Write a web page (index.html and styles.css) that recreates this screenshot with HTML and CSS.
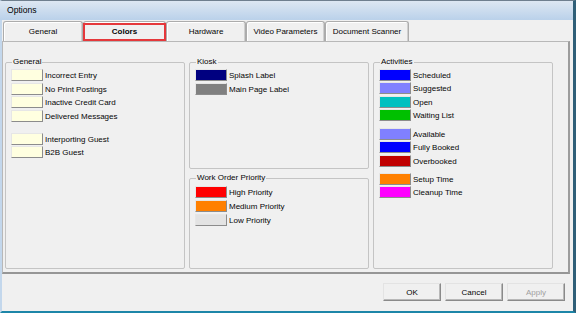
FILE: index.html
```html
<!DOCTYPE html>
<html>
<head>
    <meta charset="utf-8">
    <title>Options</title>
    <link rel="stylesheet" href="styles.css">
</head>
<body>
    <div class="window">
        <div class="titlebar">Options</div>
        <div class="tabs">
            <div class="tab tab-general">General</div>
            <div class="tab tab-colors active">Colors</div>
            <div class="tab tab-hardware">Hardware</div>
            <div class="tab tab-video">Video Parameters</div>
            <div class="tab tab-scanner">Document Scanner</div>
        </div>
        <div class="panel">
            <fieldset class="group group-tall general">
                <legend>General</legend>
                <div class="row"><span class="swatch" style="background:#ffffe0"></span><span class="label">Incorrect Entry</span></div>
                <div class="row"><span class="swatch" style="background:#ffffe0"></span><span class="label">No Print Postings</span></div>
                <div class="row"><span class="swatch" style="background:#ffffe0"></span><span class="label">Inactive Credit Card</span></div>
                <div class="row"><span class="swatch" style="background:#ffffe0"></span><span class="label">Delivered Messages</span></div>
                <div class="row spaced"><span class="swatch" style="background:#ffffe0"></span><span class="label">Interporting Guest</span></div>
                <div class="row"><span class="swatch" style="background:#ffffe0"></span><span class="label">B2B Guest</span></div>
            </fieldset>
            <div class="middle">
                <fieldset class="group kiosk">
                    <legend>Kiosk</legend>
                    <div class="row"><span class="swatch" style="background:#000080"></span><span class="label">Splash Label</span></div>
                    <div class="row"><span class="swatch" style="background:#808080"></span><span class="label">Main Page Label</span></div>
                </fieldset>
                <fieldset class="group priority">
                    <legend>Work Order Priority</legend>
                    <div class="row"><span class="swatch" style="background:#ff0000"></span><span class="label">High Priority</span></div>
                    <div class="row"><span class="swatch" style="background:#ff8000"></span><span class="label">Medium Priority</span></div>
                    <div class="row"><span class="swatch" style="background:#e3e3e3"></span><span class="label">Low Priority</span></div>
                </fieldset>
            </div>
            <fieldset class="group group-tall activities">
                <legend>Activities</legend>
                <div class="row"><span class="swatch" style="background:#0000ff"></span><span class="label">Scheduled</span></div>
                <div class="row"><span class="swatch" style="background:#8080ff"></span><span class="label">Suggested</span></div>
                <div class="row"><span class="swatch" style="background:#00c0c0"></span><span class="label">Open</span></div>
                <div class="row"><span class="swatch" style="background:#00c000"></span><span class="label">Waiting List</span></div>
                <div class="row spaced"><span class="swatch" style="background:#8080ff"></span><span class="label">Available</span></div>
                <div class="row"><span class="swatch" style="background:#0000ff"></span><span class="label">Fully Booked</span></div>
                <div class="row"><span class="swatch" style="background:#c00000"></span><span class="label">Overbooked</span></div>
                <div class="row spaced-sm"><span class="swatch" style="background:#ff8000"></span><span class="label">Setup Time</span></div>
                <div class="row"><span class="swatch" style="background:#ff00ff"></span><span class="label">Cleanup Time</span></div>
            </fieldset>
        </div>
        <div class="footer">
            <button class="btn">OK</button>
            <button class="btn">Cancel</button>
            <button class="btn" disabled>Apply</button>
        </div>
    </div>
</body>
</html>
```

FILE: styles.css
```css
* {
    box-sizing: border-box;
    margin: 0;
    padding: 0;
}
body {
    font-family: "Liberation Sans", Arial, sans-serif;
    font-size: 8px;
    color: #050505;
    background: #f0f0f0;
}
.window {
    width: 576px;
    height: 313px;
    display: flex;
    flex-direction: column;
    background: #f0f0f0;
    border-top: 1px solid #6f7f8e;
    border-right: 3px solid #2f5f78;
    border-bottom: 2px solid #1d86a8;
    border-left: 2px solid #c3d7ec;
}
.titlebar {
    height: 19px;
    margin-left: -2px;
    padding-left: 7px;
    line-height: 19px;
    font-size: 8.6px;
    color: #000;
    background: linear-gradient(#dde7f2, #bad1ea);
}
.tabs {
    display: flex;
    height: 20px;
    margin: 1px 0 0 1px;
}
.tab {
    position: relative;
    height: 20px;
    padding-top: 1px;
    line-height: 18px;
    text-align: center;
    border: 1px solid #acacac;
    border-bottom: none;
    border-radius: 3px 3px 0 0;
    box-shadow: inset 1px 1px 0 #fff, inset -1px 0 0 #cfcfcf;
}
.tab-general { width: 80px; }
.tab-colors { width: 83px; }
.tab-hardware { width: 80px; }
.tab-video { width: 79px; }
.tab-scanner { width: 84px; }
.tab.active {
    font-weight: bold;
}
.tab.active::after {
    content: "";
    position: absolute;
    top: 1px;
    left: -1px;
    right: -1px;
    bottom: 0;
    border: 2px solid #e5383b;
}
.panel {
    height: 233px;
    margin-right: 3px;
    padding: 15px 0 0 2px;
    display: grid;
    grid-template-columns: 180px 180px 180px;
    column-gap: 4px;
    align-content: start;
    border-top: 1px solid #b8b8b8;
    border-left: 1px solid #b8b8b8;
    border-right: 2px solid #9c9c9c;
    border-bottom: 2px solid #969696;
}
.group {
    min-width: 0;
    padding: 2px 5px 0;
    border: 1px solid #c4c4c4;
    border-radius: 2px;
}
.group legend {
    margin-left: 1px;
    padding: 0 1px;
    line-height: 10px;
}
.group-tall {
    height: 212px;
}
.middle {
    display: flex;
    flex-direction: column;
    gap: 4px;
}
.kiosk {
    height: 112px;
}
.priority {
    height: 96px;
    padding-top: 3px;
}
.row {
    display: flex;
    align-items: flex-start;
    height: 13.5px;
}
.kiosk .row,
.priority .row {
    height: 14px;
}
.activities .row {
    height: 13.3px;
}
.general .spaced {
    margin-top: 9.5px;
}
.activities .spaced {
    margin-top: 6px;
}
.activities .spaced-sm {
    margin-top: 5px;
}
.swatch {
    flex: none;
    width: 32px;
    height: 12px;
    border: 1px solid;
    border-color: #e6e6e6 #8c8c8c #8c8c8c #e6e6e6;
}
.label {
    margin-left: 2px;
    padding-top: 1px;
    line-height: 12px;
    white-space: nowrap;
}
.footer {
    display: flex;
    justify-content: flex-end;
    gap: 4px;
    margin-top: 9px;
    padding-right: 8px;
}
.btn {
    width: 58px;
    height: 18px;
    font-family: inherit;
    font-size: 8px;
    color: #050505;
    background: #f0f0f0;
    border: 1px solid;
    border-color: #e3e3e3 #8a8a8a #8a8a8a #e3e3e3;
    box-shadow: inset -1px -1px 0 #b8b8b8;
}
.btn:disabled {
    color: #a0a0a0;
}
```
